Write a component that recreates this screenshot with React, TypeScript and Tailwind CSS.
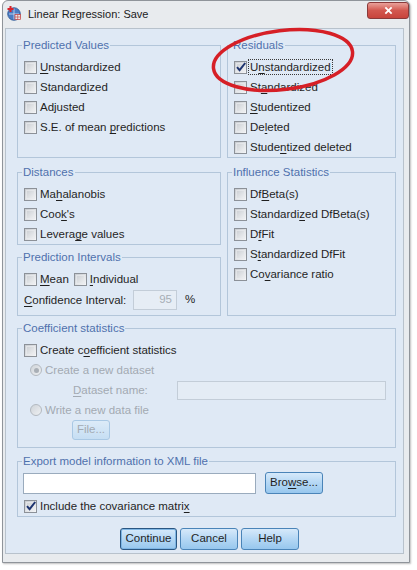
import type { ReactNode } from "react";

// mnemonic label: underlines the access-key letter
function Mn({ text, at }: { text: string; at?: number }) {
  if (at === undefined) return <>{text}</>;
  return (
    <>
      {text.slice(0, at)}
      <span className="underline underline-offset-[2px]">{text[at]}</span>
      {text.slice(at + 1)}
    </>
  );
}

function Box({ checked }: { checked?: boolean }) {
  return (
    <span className="relative flex h-[13px] w-[13px] shrink-0 items-center justify-center border border-[#8c9198] bg-gradient-to-br from-[#c6cacf] to-[#f6f7f8]">
      <span className="absolute inset-[1px] border border-[#e9ebee]/70" />
      {checked && (
        <svg viewBox="0 0 12 12" className="absolute left-[0px] top-[-1px] h-[12px] w-[12px]">
          <path d="M2 6.2 L4.6 9.2 L10.2 2" fill="none" stroke="#1d3470" strokeWidth="2" />
        </svg>
      )}
    </span>
  );
}

function Check({
  label,
  at,
  checked,
  focus,
}: {
  label: string;
  at?: number;
  checked?: boolean;
  focus?: boolean;
}) {
  return (
    <div className="flex h-[20px] items-center gap-[3px]">
      <Box checked={checked} />
      <span
        className={
          focus
            ? "ml-[-2px] border border-dotted border-[#3a3a3a] px-[1px] leading-[14px]"
            : "leading-[14px]"
        }
      >
        <Mn text={label} at={at} />
      </span>
    </div>
  );
}

function Radio({ label, on }: { label: string; on?: boolean }) {
  return (
    <div className="flex h-[20px] items-center gap-[3px] pl-[6px] text-[#a3aab2]">
      <span className="flex h-[12px] w-[12px] items-center justify-center rounded-full border border-[#b3b9c0] bg-gradient-to-br from-[#cfd4d9] to-[#eef0f2]">
        {on && <span className="h-[5px] w-[5px] rounded-full bg-[#a9afb6]" />}
      </span>
      <span className="leading-[14px]">{label}</span>
    </div>
  );
}

function Group({
  title,
  className = "",
  children,
}: {
  title: string;
  className?: string;
  children: ReactNode;
}) {
  return (
    <fieldset className={`min-w-0 border border-[#b3c6da] px-[6px] ${className}`}>
      <legend className="ml-[-2px] px-[1px] leading-[14px] text-[#4f71ad]">{title}</legend>
      {children}
    </fieldset>
  );
}

const aeroBtn =
  "flex h-[22px] items-center justify-center rounded-[3px] border bg-gradient-to-b from-[#d6e9fa] via-[#b4d7f4] to-[#97c7ee] text-[#1f1f1f]";

function SpssIcon() {
  return (
    <svg viewBox="0 0 16 16" className="h-[16px] w-[16px]">
      <circle cx="8" cy="9" r="6.3" fill="#4a7cc4" stroke="#2b5592" strokeWidth="0.8" />
      <path d="M3 9 H13 M8 3.5 V14.5" stroke="#cfe0f5" strokeWidth="0.8" />
      <rect x="9" y="9.5" width="5.5" height="5" fill="#e8e8e8" stroke="#c63a3a" strokeWidth="0.7" />
      <path d="M9 12 H14.5 M11.7 9.5 V14.5" stroke="#c63a3a" strokeWidth="0.6" />
      <path d="M4.5 1 V7 M1.5 4 H7.5" stroke="#d8222a" strokeWidth="2" />
    </svg>
  );
}

export default function App() {
  return (
    <div className="h-[570px] w-[417px] overflow-hidden bg-white pl-[2px] font-['Liberation_Sans',Arial,sans-serif] text-[11.5px] text-[#1f1f1f]">
      <div className="relative flex h-[563px] w-[408px] flex-col rounded-t-[6px] border border-[#8f949a] bg-[#e8ebee] shadow-[1px_1px_2px_rgba(0,0,0,0.25)]">
        {/* title bar */}
        <div className="flex h-[27px] items-start">
          <div className="mt-[4px] ml-[3px]">
            <SpssIcon />
          </div>
          <span className="mt-[6px] ml-[6px] text-[11px] leading-[14px] text-[#1c1c1c]">
            Linear Regression: Save
          </span>
          <div className="ml-auto mt-[1px] flex h-[17px] w-[42px] items-center justify-center rounded-[3px] border border-[#8a3a3a] bg-gradient-to-b from-[#e8a09a] via-[#d2574f] to-[#c8443c]">
            <svg viewBox="0 0 10 10" className="h-[9px] w-[9px]">
              <path d="M1.5 1.5 L8.5 8.5 M8.5 1.5 L1.5 8.5" stroke="white" strokeWidth="2" />
            </svg>
          </div>
        </div>

        {/* dialog body */}
        <div className="mx-[2px] mb-[8px] mr-[5px] flex flex-1 flex-col border border-[#b8c2cc] bg-[#dfe9f5] pl-[11px] pr-[7px] pt-[9px]">
          <div className="grid grid-cols-[204px_169px] gap-x-[6px]">
            <Group title="Predicted Values">
              <div className="pt-[5px]">
                <Check label="Unstandardized" at={0} />
                <Check label="Standardized" at={7} />
                <Check label="Adjusted" />
                <Check label="S.E. of mean predictions" at={13} />
              </div>
            </Group>
            <Group title="Residuals">
              <div className="pt-[5px]">
                <Check label="Unstandardized" at={1} checked focus />
                <Check label="Standardized" at={2} />
                <Check label="Studentized" at={0} />
                <Check label="Deleted" at={2} />
                <Check label="Studentized deleted" at={5} />
              </div>
            </Group>

            <div className="mt-[7px] flex flex-col gap-[5px]">
              <Group title="Distances">
                <div className="pt-[5px]">
                  <Check label="Mahalanobis" at={2} />
                  <Check label="Cook's" at={3} />
                  <Check label="Leverage values" at={6} />
                </div>
              </Group>
              <Group title="Prediction Intervals" className="pb-[5px]">
                <div className="flex gap-[5px] pt-[5px]">
                  <Check label="Mean" at={0} />
                  <Check label="Individual" at={0} />
                </div>
                <div className="flex h-[21px] items-center">
                  <span className="w-[109px] leading-[14px]">
                    <Mn text="Confidence Interval:" at={0} />
                  </span>
                  <div className="flex h-[20px] w-[44px] items-center justify-end border border-[#c3cdd8] bg-[#e6edf5] pr-[4px] text-[#a6adb5]">
                    95
                  </div>
                  <span className="ml-[8px]">%</span>
                </div>
              </Group>
            </div>
            <Group title="Influence Statistics" className="mt-[7px]">
              <div className="pt-[5px]">
                <Check label="DfBeta(s)" at={2} />
                <Check label="Standardized DfBeta(s)" at={9} />
                <Check label="DfFit" at={1} />
                <Check label="Standardized DfFit" at={1} />
                <Check label="Covariance ratio" at={2} />
              </div>
            </Group>
          </div>

          <Group title="Coefficient statistics" className="mt-[5px] pb-[7px]">
            <div className="pt-[5px]">
              <Check label="Create coefficient statistics" at={8} />
              <Radio label="Create a new dataset" on />
              <div className="flex h-[20px] items-center pl-[49px] text-[#a3aab2]">
                <span className="w-[104px] leading-[14px]">
                  <Mn text="Dataset name:" at={0} />
                </span>
                <div className="h-[19px] w-[209px] border border-[#c3cdd8] bg-[#e4ecf5]" />
              </div>
              <Radio label="Write a new data file" />
              <div className="ml-[48px] flex h-[20px] w-[38px] items-center justify-center rounded-[3px] border border-[#a9c8e4] bg-gradient-to-b from-[#dcebf8] to-[#c6def3] text-[#a3aab2]">
                File...
              </div>
            </div>
          </Group>

          <Group title="Export model information to XML file" className="mt-[6px]">
            <div className="flex items-center gap-[9px] pt-[4px]">
              <div className="ml-[-1px] h-[21px] w-[233px] border border-[#9aabbd] bg-white" />
              <div className={`${aeroBtn} w-[58px] border-[#4a84b8]`}>
                <Mn text="Browse..." at={3} />
              </div>
            </div>
            <div className="mt-[2px]">
              <Check label="Include the covariance matrix" at={28} checked />
            </div>
          </Group>

          <div className="mt-[11px] flex justify-center gap-[3px] pl-[6px]">
            <div className={`${aeroBtn} w-[57px] border-[#2a5682] shadow-[inset_0_0_0_1px_#7fb6e4]`}>
              Continue
            </div>
            <div className={`${aeroBtn} w-[58px] border-[#4a84b8]`}>Cancel</div>
            <div className={`${aeroBtn} w-[58px] border-[#4a84b8]`}>Help</div>
          </div>
        </div>

        {/* red marker ring drawn over the Residuals box */}
        <svg
          viewBox="0 0 150 70"
          className="pointer-events-none absolute left-[205px] top-[24px] h-[70px] w-[150px]"
        >
          <ellipse
            cx="75"
            cy="35"
            rx="70"
            ry="29.5"
            transform="rotate(-7 75 35)"
            fill="none"
            stroke="#d61f26"
            strokeWidth="3.5"
          />
        </svg>
      </div>
    </div>
  );
}
